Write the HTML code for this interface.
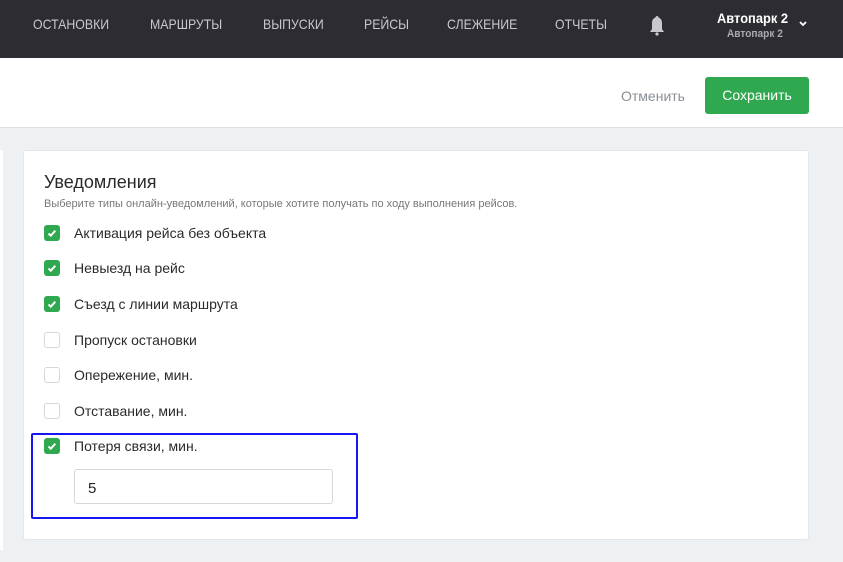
<!DOCTYPE html>
<html><head><meta charset="utf-8"><style>
*{margin:0;padding:0;box-sizing:border-box}
body{width:843px;height:562px;overflow:hidden;background:#eef1f4;font-family:"Liberation Sans",sans-serif;position:relative}
.hdr{position:absolute;left:0;top:0;width:843px;height:58px;background:#2d2c33}
.nav{position:absolute;top:16px;color:#c8c8ce;font-size:14px;transform:scaleX(0.88);transform-origin:left}
.bar{position:absolute;left:0;top:58px;width:843px;height:70px;background:#fff;border-bottom:1px solid #dde1e5}
.btn{position:absolute;left:705px;top:77px;width:104px;height:37px;background:#2fa84f;border-radius:3px;color:#fff;font-size:14px;text-align:center;line-height:37px}
.card{position:absolute;left:23px;top:150px;width:786px;height:390px;background:#fff;border:1px solid #e3e6ea;border-radius:3px}
.row{position:absolute;left:44px;height:18px;font-size:14px;color:#2a2a2a}
.cb{position:absolute;left:0;top:0;width:16px;height:16px;border-radius:3px}
.on{background:#2fa84f}
.off{border:1px solid #d4d7db;background:#fff}
.row span{position:absolute;left:30px;top:0;white-space:nowrap;line-height:16px}
</style></head><body>
<div class="hdr">
<div class="nav" style="left:33px">ОСТАНОВКИ</div>
<div class="nav" style="left:150px">МАРШРУТЫ</div>
<div class="nav" style="left:263px">ВЫПУСКИ</div>
<div class="nav" style="left:364px">РЕЙСЫ</div>
<div class="nav" style="left:447px">СЛЕЖЕНИЕ</div>
<div class="nav" style="left:555px">ОТЧЕТЫ</div>
<svg style="position:absolute;left:648px;top:15px" width="18" height="22" viewBox="0 0 18 22"><path d="M9 1c-1 0-1.5.7-1.5 1.5C5 3.3 4 5.5 4 8v6l-2 3h14l-2-3V8c0-2.5-1-4.7-3.5-5.5C10.5 1.7 10 1 9 1z" fill="#c8c8ce"/><circle cx="9" cy="19" r="1.6" fill="#c8c8ce"/></svg>
<div style="position:absolute;left:717px;top:10px;color:#fff;font-size:14px;font-weight:bold;transform:scaleX(.92);transform-origin:left">Автопарк 2</div>
<div style="position:absolute;left:727px;top:28px;color:#a9a9b0;font-size:11px;font-weight:bold;transform:scaleX(.92);transform-origin:left">Автопарк 2</div>
<svg style="position:absolute;left:798px;top:20px" width="10" height="8" viewBox="0 0 10 8"><path d="M2 2l3 3 3-3" stroke="#fff" stroke-width="1.8" fill="none"/></svg>
</div>
<div class="bar">
<div style="position:absolute;left:621px;top:30px;color:#8a8f96;font-size:14px">Отменить</div>
</div>
<div class="btn">Сохранить</div>
<div style="position:absolute;left:0;top:150px;width:3px;height:400px;background:#fff"></div>
<div class="card"></div>
<div style="position:absolute;left:44px;top:172px;font-size:18px;color:#2a2a2a">Уведомления</div>
<div style="position:absolute;left:44px;top:198px;font-size:11px;color:#777">Выберите типы онлайн-уведомлений, которые хотите получать по ходу выполнения рейсов.</div>
<div class="row" style="top:225px"><div class="cb on"><svg width="16" height="16"><path d="M4.5 8.5l2.3 2.2 4.5-5" stroke="#fff" stroke-width="2" fill="none"/></svg></div><span>Активация рейса без объекта</span></div>
<div class="row" style="top:260px"><div class="cb on"><svg width="16" height="16"><path d="M4.5 8.5l2.3 2.2 4.5-5" stroke="#fff" stroke-width="2" fill="none"/></svg></div><span>Невыезд на рейс</span></div>
<div class="row" style="top:296px"><div class="cb on"><svg width="16" height="16"><path d="M4.5 8.5l2.3 2.2 4.5-5" stroke="#fff" stroke-width="2" fill="none"/></svg></div><span>Съезд с линии маршрута</span></div>
<div class="row" style="top:332px"><div class="cb off"></div><span>Пропуск остановки</span></div>
<div class="row" style="top:367px"><div class="cb off"></div><span>Опережение, мин.</span></div>
<div class="row" style="top:403px"><div class="cb off"></div><span>Отставание, мин.</span></div>
<div class="row" style="top:438px"><div class="cb on"><svg width="16" height="16"><path d="M4.5 8.5l2.3 2.2 4.5-5" stroke="#fff" stroke-width="2" fill="none"/></svg></div><span>Потеря связи, мин.</span></div>
<div style="position:absolute;left:74px;top:469px;width:259px;height:35px;border:1px solid #d4d7db;border-radius:3px;font-size:15px;color:#222;padding:10px 0 0 13px">5</div>
<div style="position:absolute;left:31px;top:433px;width:327px;height:86px;border:2px solid #1717f5;border-radius:2px"></div>
</body></html>
